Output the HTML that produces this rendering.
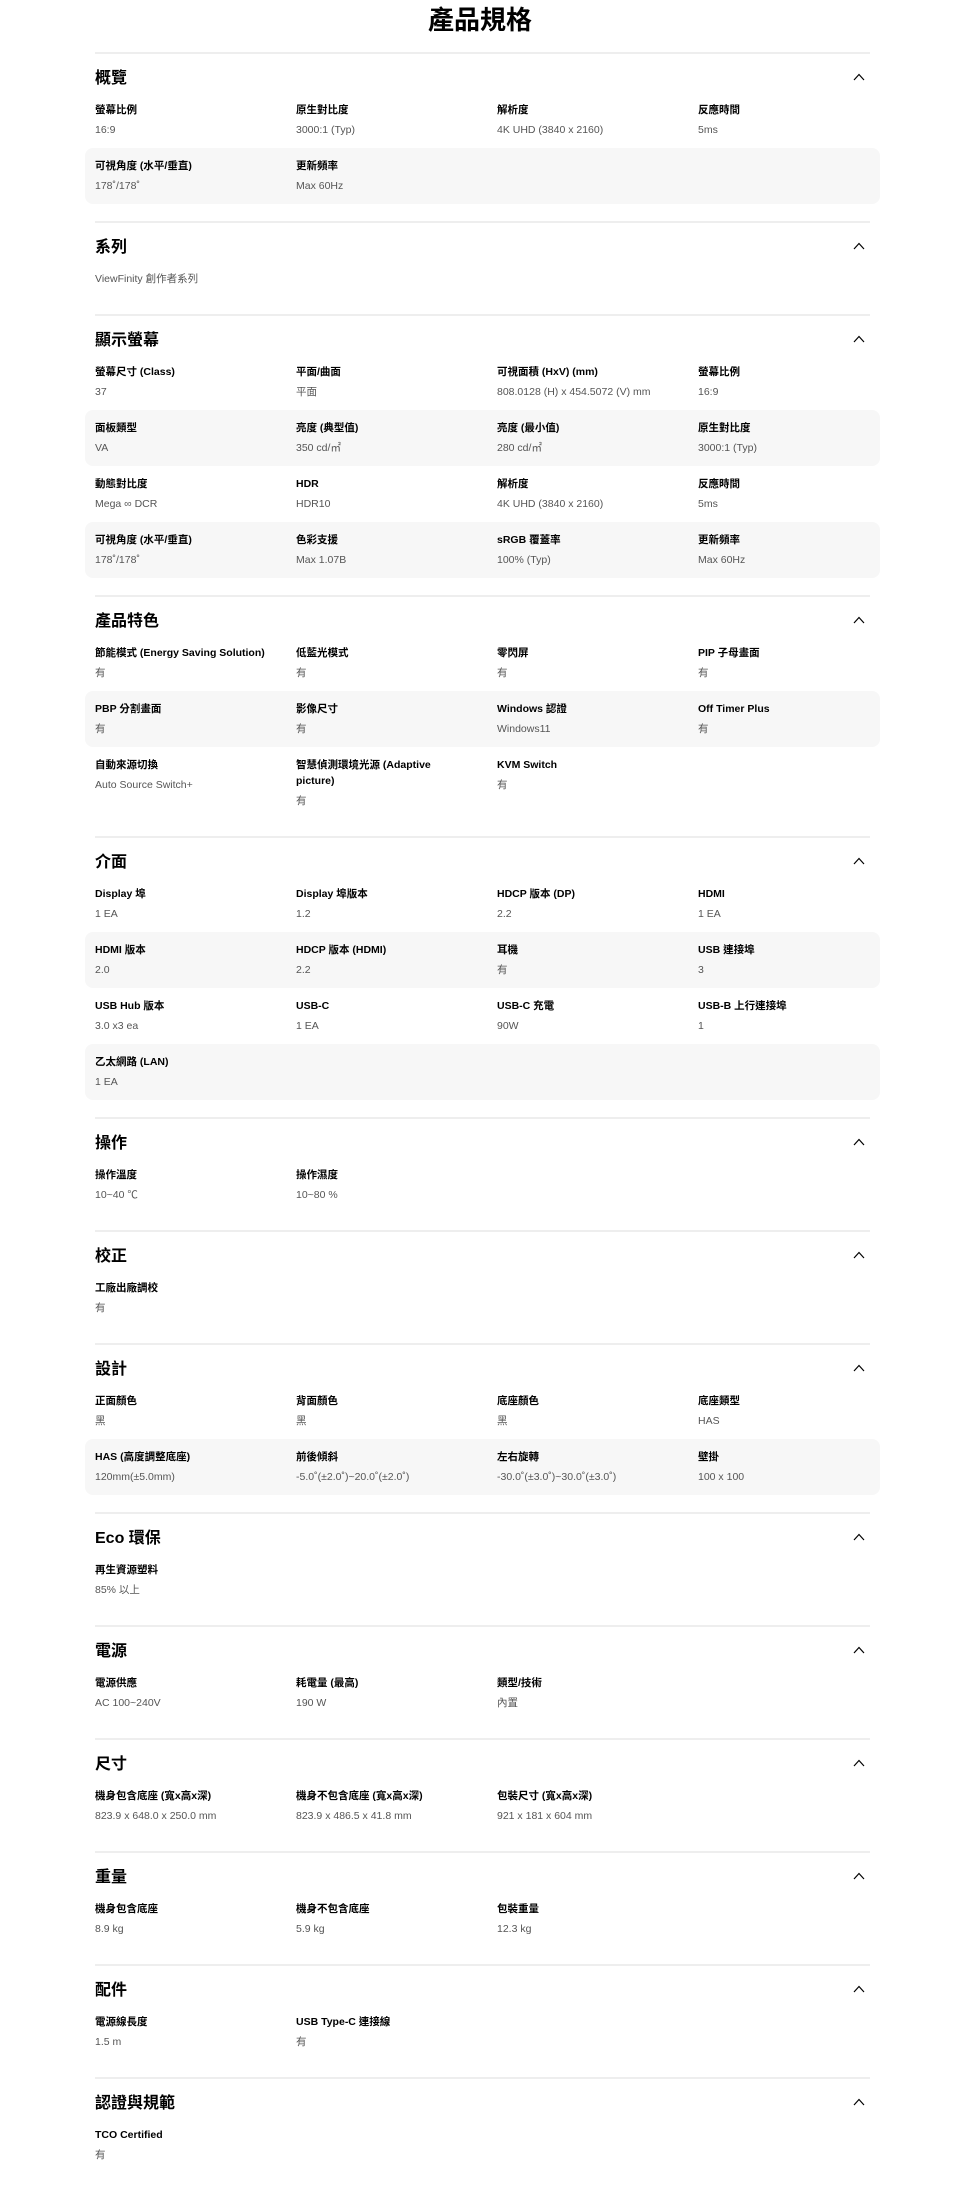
<!DOCTYPE html>
<html><head><meta charset="utf-8"><style>
*{margin:0;padding:0;box-sizing:border-box}
body{width:960px;height:2194px;background:#fff;font-family:"Liberation Sans","Noto Sans CJK TC",sans-serif;color:#000;overflow:hidden}
h1{height:52px;text-align:center;font-size:26px;font-weight:bold;line-height:40px}
.sec{margin:0 90px 0 95px;border-top:2px solid #eee;padding-bottom:17px;position:relative}
.hd{height:38px;line-height:50px;font-size:16px;font-weight:bold;position:relative}
.hd svg{position:absolute;right:5px;top:19px}
.row{display:flex;margin:0 -10px;padding:10px 10px 8px;border-radius:8px}
.row.g{background:#f7f7f7}
.c{width:201px;flex-shrink:0;padding-right:30px}
.l{font-size:10.5px;line-height:16px;font-weight:bold}
.v{font-size:10.5px;line-height:20px;color:#555;margin-top:2px;white-space:nowrap}
.row.vo{padding:8px 10px}
.row.vo .v{margin-top:0}
</style></head><body>
<h1>產品規格</h1>
<div class="sec"><div class="hd">概覽<svg width="12" height="8" viewBox="0 0 12 8"><path d="M1 7L6 1.5L11 7" fill="none" stroke="#000" stroke-width="1.2"/></svg></div>
<div class="row"><div class="c"><div class="l">螢幕比例</div><div class="v">16:9</div></div><div class="c"><div class="l">原生對比度</div><div class="v">3000:1 (Typ)</div></div><div class="c"><div class="l">解析度</div><div class="v">4K UHD (3840 x 2160)</div></div><div class="c"><div class="l">反應時間</div><div class="v">5ms</div></div></div>
<div class="row g"><div class="c"><div class="l">可視角度 (水平/垂直)</div><div class="v">178˚/178˚</div></div><div class="c"><div class="l">更新頻率</div><div class="v">Max 60Hz</div></div></div>
</div>
<div class="sec"><div class="hd">系列<svg width="12" height="8" viewBox="0 0 12 8"><path d="M1 7L6 1.5L11 7" fill="none" stroke="#000" stroke-width="1.2"/></svg></div>
<div class="row vo"><div class="c" style="width:300px"><div class="v">ViewFinity 創作者系列</div></div></div>
</div>
<div class="sec"><div class="hd">顯示螢幕<svg width="12" height="8" viewBox="0 0 12 8"><path d="M1 7L6 1.5L11 7" fill="none" stroke="#000" stroke-width="1.2"/></svg></div>
<div class="row"><div class="c"><div class="l">螢幕尺寸 (Class)</div><div class="v">37</div></div><div class="c"><div class="l">平面/曲面</div><div class="v">平面</div></div><div class="c"><div class="l">可視面積 (HxV) (mm)</div><div class="v">808.0128 (H) x 454.5072 (V) mm</div></div><div class="c"><div class="l">螢幕比例</div><div class="v">16:9</div></div></div>
<div class="row g"><div class="c"><div class="l">面板類型</div><div class="v">VA</div></div><div class="c"><div class="l">亮度 (典型值)</div><div class="v">350 cd/㎡</div></div><div class="c"><div class="l">亮度 (最小值)</div><div class="v">280 cd/㎡</div></div><div class="c"><div class="l">原生對比度</div><div class="v">3000:1 (Typ)</div></div></div>
<div class="row"><div class="c"><div class="l">動態對比度</div><div class="v">Mega ∞ DCR</div></div><div class="c"><div class="l">HDR</div><div class="v">HDR10</div></div><div class="c"><div class="l">解析度</div><div class="v">4K UHD (3840 x 2160)</div></div><div class="c"><div class="l">反應時間</div><div class="v">5ms</div></div></div>
<div class="row g"><div class="c"><div class="l">可視角度 (水平/垂直)</div><div class="v">178˚/178˚</div></div><div class="c"><div class="l">色彩支援</div><div class="v">Max 1.07B</div></div><div class="c"><div class="l">sRGB 覆蓋率</div><div class="v">100% (Typ)</div></div><div class="c"><div class="l">更新頻率</div><div class="v">Max 60Hz</div></div></div>
</div>
<div class="sec"><div class="hd">產品特色<svg width="12" height="8" viewBox="0 0 12 8"><path d="M1 7L6 1.5L11 7" fill="none" stroke="#000" stroke-width="1.2"/></svg></div>
<div class="row"><div class="c" style="padding-right:5px"><div class="l">節能模式 (Energy Saving Solution)</div><div class="v">有</div></div><div class="c"><div class="l">低藍光模式</div><div class="v">有</div></div><div class="c"><div class="l">零閃屏</div><div class="v">有</div></div><div class="c"><div class="l">PIP 子母畫面</div><div class="v">有</div></div></div>
<div class="row g"><div class="c"><div class="l">PBP 分割畫面</div><div class="v">有</div></div><div class="c"><div class="l">影像尺寸</div><div class="v">有</div></div><div class="c"><div class="l">Windows 認證</div><div class="v">Windows11</div></div><div class="c"><div class="l">Off Timer Plus</div><div class="v">有</div></div></div>
<div class="row"><div class="c"><div class="l">自動來源切換</div><div class="v">Auto Source Switch+</div></div><div class="c"><div class="l">智慧偵測環境光源 (Adaptive picture)</div><div class="v">有</div></div><div class="c"><div class="l">KVM Switch</div><div class="v">有</div></div></div>
</div>
<div class="sec"><div class="hd">介面<svg width="12" height="8" viewBox="0 0 12 8"><path d="M1 7L6 1.5L11 7" fill="none" stroke="#000" stroke-width="1.2"/></svg></div>
<div class="row"><div class="c"><div class="l">Display 埠</div><div class="v">1 EA</div></div><div class="c"><div class="l">Display 埠版本</div><div class="v">1.2</div></div><div class="c"><div class="l">HDCP 版本 (DP)</div><div class="v">2.2</div></div><div class="c"><div class="l">HDMI</div><div class="v">1 EA</div></div></div>
<div class="row g"><div class="c"><div class="l">HDMI 版本</div><div class="v">2.0</div></div><div class="c"><div class="l">HDCP 版本 (HDMI)</div><div class="v">2.2</div></div><div class="c"><div class="l">耳機</div><div class="v">有</div></div><div class="c"><div class="l">USB 連接埠</div><div class="v">3</div></div></div>
<div class="row"><div class="c"><div class="l">USB Hub 版本</div><div class="v">3.0 x3 ea</div></div><div class="c"><div class="l">USB-C</div><div class="v">1 EA</div></div><div class="c"><div class="l">USB-C 充電</div><div class="v">90W</div></div><div class="c"><div class="l">USB-B 上行連接埠</div><div class="v">1</div></div></div>
<div class="row g"><div class="c"><div class="l">乙太網路 (LAN)</div><div class="v">1 EA</div></div></div>
</div>
<div class="sec"><div class="hd">操作<svg width="12" height="8" viewBox="0 0 12 8"><path d="M1 7L6 1.5L11 7" fill="none" stroke="#000" stroke-width="1.2"/></svg></div>
<div class="row"><div class="c"><div class="l">操作溫度</div><div class="v">10~40 ℃</div></div><div class="c"><div class="l">操作濕度</div><div class="v">10~80 %</div></div></div>
</div>
<div class="sec"><div class="hd">校正<svg width="12" height="8" viewBox="0 0 12 8"><path d="M1 7L6 1.5L11 7" fill="none" stroke="#000" stroke-width="1.2"/></svg></div>
<div class="row"><div class="c"><div class="l">工廠出廠調校</div><div class="v">有</div></div></div>
</div>
<div class="sec"><div class="hd">設計<svg width="12" height="8" viewBox="0 0 12 8"><path d="M1 7L6 1.5L11 7" fill="none" stroke="#000" stroke-width="1.2"/></svg></div>
<div class="row"><div class="c"><div class="l">正面顏色</div><div class="v">黑</div></div><div class="c"><div class="l">背面顏色</div><div class="v">黑</div></div><div class="c"><div class="l">底座顏色</div><div class="v">黑</div></div><div class="c"><div class="l">底座類型</div><div class="v">HAS</div></div></div>
<div class="row g"><div class="c"><div class="l">HAS (高度調整底座)</div><div class="v">120mm(±5.0mm)</div></div><div class="c"><div class="l">前後傾斜</div><div class="v">-5.0˚(±2.0˚)~20.0˚(±2.0˚)</div></div><div class="c"><div class="l">左右旋轉</div><div class="v">-30.0˚(±3.0˚)~30.0˚(±3.0˚)</div></div><div class="c"><div class="l">壁掛</div><div class="v">100 x 100</div></div></div>
</div>
<div class="sec"><div class="hd">Eco 環保<svg width="12" height="8" viewBox="0 0 12 8"><path d="M1 7L6 1.5L11 7" fill="none" stroke="#000" stroke-width="1.2"/></svg></div>
<div class="row"><div class="c"><div class="l">再生資源塑料</div><div class="v">85% 以上</div></div></div>
</div>
<div class="sec"><div class="hd">電源<svg width="12" height="8" viewBox="0 0 12 8"><path d="M1 7L6 1.5L11 7" fill="none" stroke="#000" stroke-width="1.2"/></svg></div>
<div class="row"><div class="c"><div class="l">電源供應</div><div class="v">AC 100~240V</div></div><div class="c"><div class="l">耗電量 (最高)</div><div class="v">190 W</div></div><div class="c"><div class="l">類型/技術</div><div class="v">內置</div></div></div>
</div>
<div class="sec"><div class="hd">尺寸<svg width="12" height="8" viewBox="0 0 12 8"><path d="M1 7L6 1.5L11 7" fill="none" stroke="#000" stroke-width="1.2"/></svg></div>
<div class="row"><div class="c"><div class="l">機身包含底座 (寬x高x深)</div><div class="v">823.9 x 648.0 x 250.0 mm</div></div><div class="c"><div class="l">機身不包含底座 (寬x高x深)</div><div class="v">823.9 x 486.5 x 41.8 mm</div></div><div class="c"><div class="l">包裝尺寸 (寬x高x深)</div><div class="v">921 x 181 x 604 mm</div></div></div>
</div>
<div class="sec"><div class="hd">重量<svg width="12" height="8" viewBox="0 0 12 8"><path d="M1 7L6 1.5L11 7" fill="none" stroke="#000" stroke-width="1.2"/></svg></div>
<div class="row"><div class="c"><div class="l">機身包含底座</div><div class="v">8.9 kg</div></div><div class="c"><div class="l">機身不包含底座</div><div class="v">5.9 kg</div></div><div class="c"><div class="l">包裝重量</div><div class="v">12.3 kg</div></div></div>
</div>
<div class="sec"><div class="hd">配件<svg width="12" height="8" viewBox="0 0 12 8"><path d="M1 7L6 1.5L11 7" fill="none" stroke="#000" stroke-width="1.2"/></svg></div>
<div class="row"><div class="c"><div class="l">電源線長度</div><div class="v">1.5 m</div></div><div class="c"><div class="l">USB Type-C 連接線</div><div class="v">有</div></div></div>
</div>
<div class="sec"><div class="hd">認證與規範<svg width="12" height="8" viewBox="0 0 12 8"><path d="M1 7L6 1.5L11 7" fill="none" stroke="#000" stroke-width="1.2"/></svg></div>
<div class="row"><div class="c"><div class="l">TCO Certified</div><div class="v">有</div></div></div>
</div>
</body></html>
